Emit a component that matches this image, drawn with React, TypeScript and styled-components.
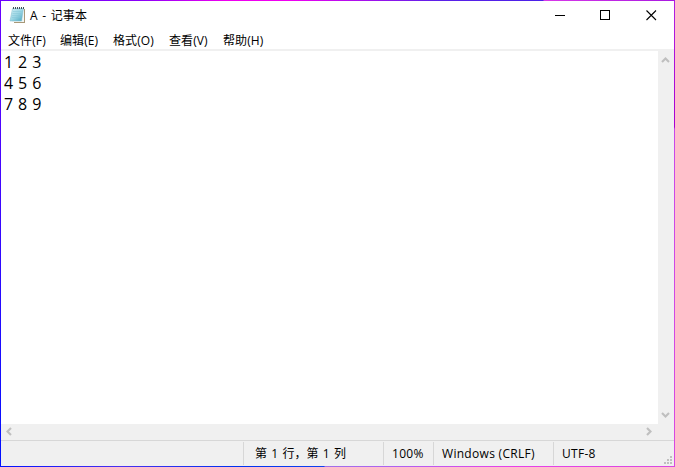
import React from "react";
import styled, { createGlobalStyle } from "styled-components";

const GlobalStyle = createGlobalStyle`
  * { box-sizing: border-box; }
  html, body { margin: 0; padding: 0; overflow: hidden; background: #fff; }
`;

const Window = styled.div`
  width: 675px;
  height: 467px;
  display: grid;
  grid-template-columns: 1px 673px 1px;
  grid-template-rows: 1px 465px 1px;
  font-family: "Open Sans", "Noto Sans CJK SC", sans-serif;
  font-size: 12px;
  color: #000;
  white-space: pre;
`;

const TopEdge = styled.div`
  grid-column: 1 / 4;
  background: linear-gradient(90deg, #6a00ff 0, #8a00f8 140px, #ee00ee 225px, #f000f0 290px, #5a20e8 440px, #4a20e8 543px, #d838e8 544px, #a818e0 675px);
`;
const LeftEdge = styled.div`
  background: linear-gradient(180deg, #6a00ff, #0010ff);
`;
const RightEdge = styled.div`
  background: linear-gradient(180deg, #b020e0 0, #a800d0 126px, #c848e8 128px, #d848e0 465px);
`;
const BottomEdge = styled.div`
  grid-column: 1 / 4;
  background: linear-gradient(90deg, #0010ff 0, #4a30ee 120px, #0030f0 235px, #1040f0 324px, #a070e8 325px, #b060f0 400px, #e840e8 510px, #d848e0 675px);
`;

const Body = styled.div`
  display: flex;
  flex-direction: column;
  min-width: 0;
`;

const TitleBar = styled.header`
  height: 30px;
  flex: none;
  display: flex;
  padding-left: 8px;
`;

const AppIcon = styled.svg`
  width: 17px;
  height: 18px;
  margin-top: 5px;
`;

const Title = styled.span`
  margin-left: 4px;
  line-height: 29px;
  letter-spacing: 0.1px;
  word-spacing: 1.3px;
  flex: 1;
`;

const CaptionButton = styled.button<{ $width: number }>`
  width: ${(p) => p.$width}px;
  height: 29px;
  padding: 0;
  border: 0;
  background: none;
  display: flex;
  align-items: center;
  justify-content: center;
`;

const MenuBar = styled.nav`
  height: 18px;
  flex: none;
  display: flex;
  padding-left: 7px;
`;

const MenuItem = styled.span<{ $width: number }>`
  width: ${(p) => p.$width}px;
  line-height: 19px;
  letter-spacing: 0.1px;
`;

const EditorArea = styled.div`
  height: 391px;
  flex: none;
  display: grid;
  grid-template-columns: 657px 16px;
  grid-template-rows: 375px 16px;
  background: #f0f0f0;
`;

const TextArea = styled.main`
  border-top: 2px solid #f0f0f0;
  background: #fff;
  padding: 1px 0 0 3px;
  font-size: 16px;
  line-height: 21px;
  word-spacing: 0.8px;
`;

const VerticalScroll = styled.div`
  display: flex;
  flex-direction: column;
  justify-content: space-between;
  padding: 7px 0 5px 3px;
`;

const HorizontalScroll = styled.div`
  display: flex;
  justify-content: space-between;
  padding: 3px 5px 0 4px;
`;

const StatusBar = styled.footer`
  height: 26px;
  flex: none;
  display: grid;
  grid-template-columns: 242px 140px 50px 120px 1fr;
  border-top: 1px solid #d7d7d7;
  background: #f0f0f0;
  position: relative;
`;

const StatusCell = styled.span<{ $indent?: number; $spacing?: number; $gap?: number }>`
  margin: 1px 0;
  border-left: 1px solid #d7d7d7;
  padding-left: ${(p) => p.$indent ?? 8}px;
  line-height: 23px;
  letter-spacing: ${(p) => p.$spacing ?? 0}px;
  word-spacing: ${(p) => p.$gap ?? 0}px;
`;

const Grip = styled.svg`
  position: absolute;
  right: 2px;
  bottom: 2px;
`;

const menus = [
  { label: "文件(F)", width: 52 },
  { label: "编辑(E)", width: 53 },
  { label: "格式(O)", width: 56 },
  { label: "查看(V)", width: 54 },
  { label: "帮助(H)", width: 60 },
];

const gripDots = [[6, 0], [3, 3], [6, 3], [0, 6], [3, 6], [6, 6]];

function Chevron({ turn }: { turn: number }) {
  return (
    <svg width="9" height="9" viewBox="0 0 9 9">
      <path
        d="M1 6 L4.5 2.5 L8 6"
        fill="none"
        stroke="#bfbfbf"
        strokeWidth="2.1"
        transform={`rotate(${turn} 4.5 4.5)`}
      />
    </svg>
  );
}

function NotepadIcon() {
  return (
    <AppIcon viewBox="0 0 17 18">
      <defs>
        <linearGradient id="page" x1="0" y1="0" x2="1" y2="1">
          <stop offset="0" stopColor="#d4eff5" />
          <stop offset="0.5" stopColor="#9cd6e4" />
          <stop offset="1" stopColor="#4aa6c0" />
        </linearGradient>
      </defs>
      <path d="M5 3 H16 V17 H5 Z" fill="#a89878" />
      <path d="M4 2.5 H15 V16 H3 Z" fill="#f2f6f4" />
      <path d="M3.5 2.5 H14.4 L12.6 15 H1 Z" fill="url(#page)" stroke="#80bccc" strokeWidth="0.5" />
      <path d="M4 5.5 H12.5 M3.5 7.5 H12 M3.2 9.5 H11.8 M3 11.5 H11.5" stroke="#84c4d6" strokeWidth="0.5" />
      <path d="M4 2 H15" stroke="#405058" strokeWidth="2" strokeDasharray="1 1" />
    </AppIcon>
  );
}

export default function App() {
  return (
    <>
      <GlobalStyle />
      <Window>
        <TopEdge />
        <LeftEdge />
        <Body>
          <TitleBar>
            <NotepadIcon />
            <Title>A - 记事本</Title>
            <CaptionButton $width={42} aria-label="最小化">
              <svg width="10" height="11"><path d="M0 5.5H10" stroke="#000" /></svg>
            </CaptionButton>
            <CaptionButton $width={48} aria-label="最大化">
              <svg width="10" height="11"><rect x="0.5" y="0.5" width="9" height="9" fill="none" stroke="#000" /></svg>
            </CaptionButton>
            <CaptionButton $width={45} aria-label="关闭">
              <svg width="11" height="11"><path d="M.5 .5L10 10M10 .5L.5 10" stroke="#000" strokeWidth="1.1" /></svg>
            </CaptionButton>
          </TitleBar>
          <MenuBar>
            {menus.map((m) => (
              <MenuItem key={m.label} $width={m.width}>{m.label}</MenuItem>
            ))}
          </MenuBar>
          <EditorArea>
            <TextArea>{"1 2 3\n4 5 6\n7 8 9"}</TextArea>
            <VerticalScroll><Chevron turn={0} /><Chevron turn={180} /></VerticalScroll>
            <HorizontalScroll><Chevron turn={-90} /><Chevron turn={90} /></HorizontalScroll>
          </EditorArea>
          <StatusBar>
            <span />
            <StatusCell $indent={11} $gap={1.2}>第 1 行，第 1 列</StatusCell>
            <StatusCell $spacing={0.3}>100%</StatusCell>
            <StatusCell $spacing={0.3}>Windows (CRLF)</StatusCell>
            <StatusCell $spacing={0.3}>UTF-8</StatusCell>
            <Grip width="8" height="8">
              {gripDots.map(([x, y]) => (
                <rect key={`${x}-${y}`} x={x} y={y} width="2" height="2" fill="#bfbfbf" />
              ))}
            </Grip>
          </StatusBar>
        </Body>
        <RightEdge />
        <BottomEdge />
      </Window>
    </>
  );
}
